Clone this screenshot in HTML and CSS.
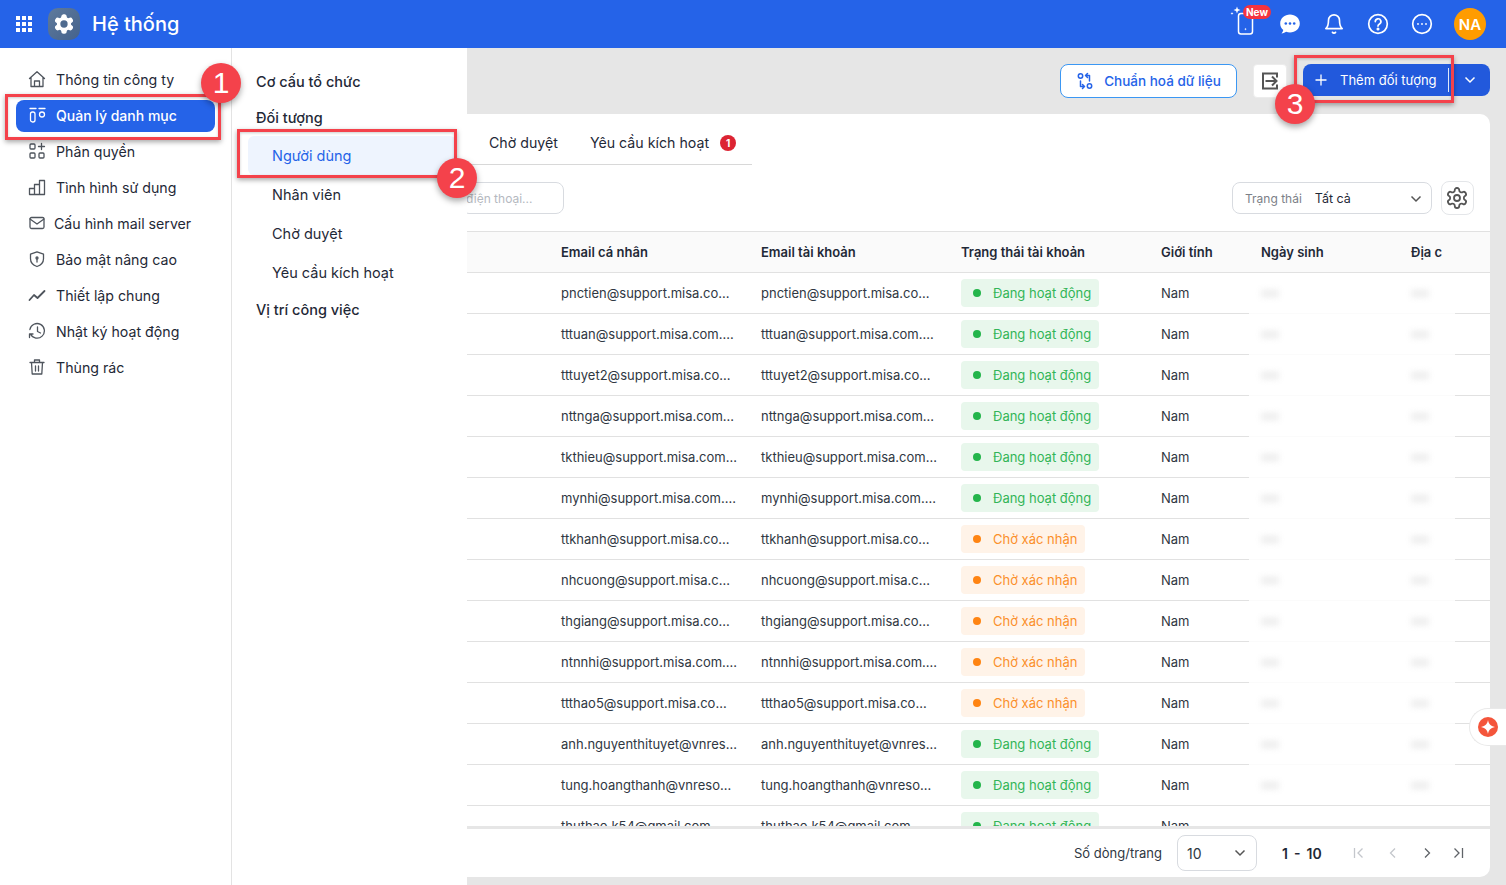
FILE: index.html
```html
<!DOCTYPE html>
<html lang="vi">
<head>
  <meta charset="UTF-8" />
  <meta name="viewport" content="width=device-width, initial-scale=1.0" />
  <title>Hệ thống</title>
  <link rel="stylesheet" href="styles.css">
</head>
<body>
  <header class="topbar">
    <div class="apps-grid"><i></i><i></i><i></i><i></i><i></i><i></i><i></i><i></i><i></i></div>
    <div class="app-logo">
      <svg width="22" height="22" viewBox="0 0 24 24"><path fill="#fff" stroke="#fff" stroke-width="1.5" d="M12.22 2h-.44a2 2 0 0 0-2 2v.18a2 2 0 0 1-1 1.73l-.43.25a2 2 0 0 1-2 0l-.15-.08a2 2 0 0 0-2.73.73l-.22.38a2 2 0 0 0 .73 2.73l.15.1a2 2 0 0 1 1 1.72v.51a2 2 0 0 1-1 1.74l-.15.09a2 2 0 0 0-.73 2.73l.22.38a2 2 0 0 0 2.73.73l.15-.08a2 2 0 0 1 2 0l.43.25a2 2 0 0 1 1 1.73V20a2 2 0 0 0 2 2h.44a2 2 0 0 0 2-2v-.18a2 2 0 0 1 1-1.73l.43-.25a2 2 0 0 1 2 0l.15.08a2 2 0 0 0 2.73-.73l.22-.39a2 2 0 0 0-.73-2.73l-.15-.08a2 2 0 0 1-1-1.74v-.5a2 2 0 0 1 1-1.74l.15-.09a2 2 0 0 0 .73-2.73l-.22-.38a2 2 0 0 0-2.73-.73l-.15.08a2 2 0 0 1-2 0l-.43-.25a2 2 0 0 1-1-1.73V4a2 2 0 0 0-2-2z"/><circle cx="12" cy="12" r="4" fill="#4f6b8f"/></svg>
    </div>
    <div class="app-title">Hệ thống</div>
    <div class="topbar-right">
      <div class="phone-new">
        <svg class="phone-icon" width="30" height="32" viewBox="0 0 30 32" fill="none" stroke="#fff" stroke-width="1.5"><rect x="7.5" y="5.5" width="14" height="20.5" rx="2.5"/><path fill="#fff" stroke="none" d="M6-1.500l.9 2.600 2.600.9-2.600.9L6 5.500l-.9-2.600-2.600-.9 2.600-.9zM1 4l.4 1.100L2.500 5.500l-1.100.4L1 7l-.4-1.100L-.5 5.500l1.100-.4zM14.500 19.800l.4.9.9.4-.9.4-.4.9-.4-.9-.9-.4.9-.4z"/></svg>
        <span class="new-tag">New</span>
      </div>
      <svg class="top-icon" width="22" height="22" viewBox="0 0 22 22"><path fill="#fff" d="M11 1.500c5.300 0 9.800 3.800 9.800 9s-4.500 9-9.800 9c-1.400 0-2.700-.3-3.900-.7-1.100.8-2.600 1.500-4.600 1.700 1-1 1.600-2.200 1.800-3.400C2.400 15.400 1.200 13.100 1.200 10.500c0-5.200 4.500-9 9.800-9z"/><circle cx="6.800" cy="10.500" r="1.300" fill="#2563e8"/><circle cx="11" cy="10.500" r="1.300" fill="#2563e8"/><circle cx="15.200" cy="10.500" r="1.300" fill="#2563e8"/></svg>
      <svg class="top-icon" width="22" height="22" viewBox="0 0 24 24" fill="none" stroke="#fff" stroke-width="1.800" stroke-linecap="round" stroke-linejoin="round"><path d="M6 8a6 6 0 0 1 12 0c0 7 3 9 3 9H3s3-2 3-9"/><path d="M10.300 21a1.940 1.940 0 0 0 3.400 0"/></svg>
      <svg class="top-icon" width="22" height="22" viewBox="0 0 22 22" fill="none" stroke="#fff" stroke-width="1.700" stroke-linecap="round"><circle cx="11" cy="11" r="9.300"/><path d="M8.300 8.600a2.800 2.800 0 1 1 4.200 2.400c-.9.500-1.500 1.100-1.500 2.100"/><circle cx="11" cy="16" r=".7" fill="#fff"/></svg>
      <svg class="top-icon" width="22" height="22" viewBox="0 0 22 22" fill="none" stroke="#fff" stroke-width="1.700"><circle cx="11" cy="11" r="9.300"/><circle cx="7" cy="11" r=".9" fill="#fff" stroke="none"/><circle cx="11" cy="11" r=".9" fill="#fff" stroke="none"/><circle cx="15" cy="11" r=".9" fill="#fff" stroke="none"/></svg>
      <div class="avatar">NA</div>
    </div>
  </header>

  <div class="layout">
    <nav class="sidebar">
      <a class="side-item">
        <svg width="18" height="18" viewBox="0 0 18 18"><path d="M1.500 8.500L9 1.800l7.500 6.700M3 7.500v9h12v-9M6.500 16.500v-5.500h5v5.500"/></svg>
        <span>Thông tin công ty</span>
      </a>
      <a class="side-item active">
        <svg width="18" height="18" viewBox="0 0 18 18"><path d="M2 2.500h6M11 2.500h6"/><rect x="2.500" y="6" width="4.500" height="10" rx="2"/><circle cx="14" cy="8.500" r="2.500"/></svg>
        <span>Quản lý danh mục</span>
      </a>
      <a class="side-item">
        <svg width="18" height="18" viewBox="0 0 18 18"><rect x="2" y="2" width="5" height="5" rx="1"/><rect x="2" y="11" width="5" height="5" rx="1"/><rect x="11" y="11" width="5" height="5" rx="1"/><path d="M13.500 1.500v6M10.500 4.500h6"/></svg>
        <span>Phân quyền</span>
      </a>
      <a class="side-item">
        <svg width="18" height="18" viewBox="0 0 18 18"><path d="M1.500 10.500h5v6h-5zM6.500 6.500h5v10h-5zM11.500 2.500h5v14h-5z"/></svg>
        <span>Tình hình sử dụng</span>
      </a>
      <a class="side-item mail">
        <svg width="18" height="18" viewBox="0 0 18 18"><rect x="2" y="3.500" width="14" height="11" rx="1.500"/><path d="M2 5l7 5 7-5"/></svg>
        <span>Cấu hình mail server</span>
      </a>
      <a class="side-item">
        <svg width="18" height="18" viewBox="0 0 18 18"><path d="M9 1.800l6.500 2.400v4.500c0 3.800-2.700 6.500-6.500 7.800-3.800-1.300-6.500-4-6.500-7.800V4.200z"/><circle cx="9" cy="8" r="1"/><path d="M9 9v3"/></svg>
        <span>Bảo mật nâng cao</span>
      </a>
      <a class="side-item">
        <svg width="18" height="18" viewBox="0 0 18 18"><path stroke-width="1.800" d="M1.500 14l4.500-5 3.500 3L16.500 5"/></svg>
        <span>Thiết lập chung</span>
      </a>
      <a class="side-item">
        <svg width="18" height="18" viewBox="0 0 18 18"><path d="M2.500 12a7.300 7.300 0 1 0-.6-4.500M1.500 15.500V12h3.500"/><path d="M9.500 5v4.500l3 1.500"/></svg>
        <span>Nhật ký hoạt động</span>
      </a>
      <a class="side-item">
        <svg width="18" height="18" viewBox="0 0 18 18"><path d="M2 4.500h14M6.500 4.500V2h5v2.500M3.500 4.500l.7 11.500h9.600l.7-11.500M7.500 8v5M10.500 8v5"/></svg>
        <span>Thùng rác</span>
      </a>
    </nav>

    <nav class="submenu">
      <div class="sub-head">Cơ cấu tổ chức</div>
      <div class="sub-head">Đối tượng</div>
      <a class="sub-item active">Người dùng</a>
      <a class="sub-item">Nhân viên</a>
      <a class="sub-item">Chờ duyệt</a>
      <a class="sub-item">Yêu cầu kích hoạt</a>
      <div class="sub-head">Vị trí công việc</div>
    </nav>

    <main class="main">
      <div class="toolbar">
        <button class="btn-outline">
          <svg width="18" height="18" viewBox="0 0 18 18" fill="none" stroke="#2563e8" stroke-width="1.500" stroke-linecap="round" stroke-linejoin="round"><circle cx="4.500" cy="4" r="2.200"/><circle cx="13.500" cy="14" r="2.200"/><path d="M4.500 9v5.500h4M6.500 12.500l2 2-2 2M13.500 9V3.500h-4M11.500 1.500l-2 2 2 2"/></svg>
          Chuẩn hoá dữ liệu
        </button>
        <button class="btn-square">
          <svg width="20" height="20" viewBox="0 0 20 20" fill="none" stroke="#555" stroke-width="2"><path d="M17 6.500V2.500H3v15h14v-4"/><path d="M5.500 10h11M12 5.500l4.500 4.500-4.500 4.500"/></svg>
        </button>
        <div class="btn-add">
          <div class="btn-add-main">
            <svg width="12" height="12" viewBox="0 0 12 12" stroke="#fff" stroke-width="1.300"><path d="M6 .5v11M.5 6h11"/></svg>
            <span>Thêm đối tượng</span>
          </div>
          <div class="btn-add-more">
            <svg width="12" height="8" viewBox="0 0 12 8" fill="none" stroke="#fff" stroke-width="1.500"><path d="M1.500 1.500L6 6l4.500-4.500"/></svg>
          </div>
        </div>
      </div>

      <section class="card">
        <div class="tabs">
          <a class="tab">Chờ duyệt</a>
          <a class="tab">Yêu cầu kích hoạt <b class="tab-badge">1</b></a>
        </div>

        <div class="filters">
          <div class="search-box">điện thoại...</div>
          <div class="status-select">
            <span class="status-label">Trạng thái</span>
            <span class="status-value">Tất cả</span>
            <svg width="12" height="8" viewBox="0 0 12 8" fill="none" stroke="#555" stroke-width="1.500"><path d="M1.500 1.500L6 6l4.500-4.500"/></svg>
          </div>
          <button class="gear-btn">
            <svg width="24" height="24" viewBox="0 0 24 24" fill="none" stroke="#555" stroke-width="1.800"><path d="M12.22 2h-.44a2 2 0 0 0-2 2v.18a2 2 0 0 1-1 1.73l-.43.25a2 2 0 0 1-2 0l-.15-.08a2 2 0 0 0-2.73.73l-.22.38a2 2 0 0 0 .73 2.73l.15.1a2 2 0 0 1 1 1.72v.51a2 2 0 0 1-1 1.74l-.15.09a2 2 0 0 0-.73 2.73l.22.38a2 2 0 0 0 2.73.73l.15-.08a2 2 0 0 1 2 0l.43.25a2 2 0 0 1 1 1.73V20a2 2 0 0 0 2 2h.44a2 2 0 0 0 2-2v-.18a2 2 0 0 1 1-1.73l.43-.25a2 2 0 0 1 2 0l.15.08a2 2 0 0 0 2.73-.73l.22-.39a2 2 0 0 0-.73-2.73l-.15-.08a2 2 0 0 1-1-1.74v-.5a2 2 0 0 1 1-1.74l.15-.09a2 2 0 0 0 .73-2.73l-.22-.38a2 2 0 0 0-2.73-.73l-.15.08a2 2 0 0 1-2 0l-.43-.25a2 2 0 0 1-1-1.73V4a2 2 0 0 0-2-2z"/><circle cx="12" cy="12" r="3"/></svg>
          </button>
        </div>

        <div class="table">
          <div class="row head">
            <div></div><div>Email cá nhân</div><div>Email tài khoản</div><div>Trạng thái tài khoản</div><div>Giới tính</div><div>Ngày sinh</div><div>Địa c</div><div></div>
          </div>
          <div class="row">
            <div></div><div>pnctien@support.misa.co...</div><div>pnctien@support.misa.co...</div><div><span class="chip ok">Đang hoạt động</span></div><div>Nam</div><div class="hidden-data"><i class="smudge"></i></div><div class="hidden-data"><i class="smudge"></i></div><div></div>
          </div>
          <div class="row">
            <div></div><div>tttuan@support.misa.com....</div><div>tttuan@support.misa.com....</div><div><span class="chip ok">Đang hoạt động</span></div><div>Nam</div><div class="hidden-data"><i class="smudge"></i></div><div class="hidden-data"><i class="smudge"></i></div><div></div>
          </div>
          <div class="row">
            <div></div><div>tttuyet2@support.misa.co...</div><div>tttuyet2@support.misa.co...</div><div><span class="chip ok">Đang hoạt động</span></div><div>Nam</div><div class="hidden-data"><i class="smudge"></i></div><div class="hidden-data"><i class="smudge"></i></div><div></div>
          </div>
          <div class="row">
            <div></div><div>nttnga@support.misa.com...</div><div>nttnga@support.misa.com...</div><div><span class="chip ok">Đang hoạt động</span></div><div>Nam</div><div class="hidden-data"><i class="smudge"></i></div><div class="hidden-data"><i class="smudge"></i></div><div></div>
          </div>
          <div class="row">
            <div></div><div>tkthieu@support.misa.com...</div><div>tkthieu@support.misa.com...</div><div><span class="chip ok">Đang hoạt động</span></div><div>Nam</div><div class="hidden-data"><i class="smudge"></i></div><div class="hidden-data"><i class="smudge"></i></div><div></div>
          </div>
          <div class="row">
            <div></div><div>mynhi@support.misa.com....</div><div>mynhi@support.misa.com....</div><div><span class="chip ok">Đang hoạt động</span></div><div>Nam</div><div class="hidden-data"><i class="smudge"></i></div><div class="hidden-data"><i class="smudge"></i></div><div></div>
          </div>
          <div class="row">
            <div></div><div>ttkhanh@support.misa.co...</div><div>ttkhanh@support.misa.co...</div><div><span class="chip wait">Chờ xác nhận</span></div><div>Nam</div><div class="hidden-data"><i class="smudge"></i></div><div class="hidden-data"><i class="smudge"></i></div><div></div>
          </div>
          <div class="row">
            <div></div><div>nhcuong@support.misa.c...</div><div>nhcuong@support.misa.c...</div><div><span class="chip wait">Chờ xác nhận</span></div><div>Nam</div><div class="hidden-data"><i class="smudge"></i></div><div class="hidden-data"><i class="smudge"></i></div><div></div>
          </div>
          <div class="row">
            <div></div><div>thgiang@support.misa.co...</div><div>thgiang@support.misa.co...</div><div><span class="chip wait">Chờ xác nhận</span></div><div>Nam</div><div class="hidden-data"><i class="smudge"></i></div><div class="hidden-data"><i class="smudge"></i></div><div></div>
          </div>
          <div class="row">
            <div></div><div>ntnnhi@support.misa.com....</div><div>ntnnhi@support.misa.com....</div><div><span class="chip wait">Chờ xác nhận</span></div><div>Nam</div><div class="hidden-data"><i class="smudge"></i></div><div class="hidden-data"><i class="smudge"></i></div><div></div>
          </div>
          <div class="row">
            <div></div><div>ttthao5@support.misa.co...</div><div>ttthao5@support.misa.co...</div><div><span class="chip wait">Chờ xác nhận</span></div><div>Nam</div><div class="hidden-data"><i class="smudge"></i></div><div class="hidden-data"><i class="smudge"></i></div><div></div>
          </div>
          <div class="row">
            <div></div><div>anh.nguyenthituyet@vnres...</div><div>anh.nguyenthituyet@vnres...</div><div><span class="chip ok">Đang hoạt động</span></div><div>Nam</div><div class="hidden-data"><i class="smudge"></i></div><div class="hidden-data"><i class="smudge"></i></div><div></div>
          </div>
          <div class="row plain">
            <div></div><div>tung.hoangthanh@vnreso...</div><div>tung.hoangthanh@vnreso...</div><div><span class="chip ok">Đang hoạt động</span></div><div>Nam</div><div><i class="smudge"></i></div><div><i class="smudge"></i></div><div></div>
          </div>
          <div class="row plain">
            <div></div><div>thuthao.k54@gmail.com</div><div>thuthao.k54@gmail.com</div><div><span class="chip ok">Đang hoạt động</span></div><div>Nam</div><div></div><div></div><div></div>
          </div>
        </div>

        <div class="pager">
          <span class="pager-label">Số dòng/trang</span>
          <div class="page-size">
            <span>10</span>
            <svg width="12" height="8" viewBox="0 0 12 8" fill="none" stroke="#555" stroke-width="1.500"><path d="M1.500 1.500L6 6l4.500-4.500"/></svg>
          </div>
          <b class="page-range">1 - 10</b>
          <div class="page-arrows">
            <svg width="12" height="12" viewBox="0 0 12 12" fill="none" stroke="#c4c7cc" stroke-width="1.300"><path d="M1.500 1v10M9.500 1.500L5 6l4.500 4.500"/></svg>
            <svg width="12" height="12" viewBox="0 0 12 12" fill="none" stroke="#c4c7cc" stroke-width="1.300"><path d="M8 1.500L3.500 6 8 10.500"/></svg>
            <svg width="12" height="12" viewBox="0 0 12 12" fill="none" stroke="#5f6368" stroke-width="1.300"><path d="M4 1.500L8.500 6 4 10.500"/></svg>
            <svg class="last-arrow" width="12" height="12" viewBox="0 0 12 12" fill="none" stroke="#5f6368" stroke-width="1.300"><path d="M10.500 1v10M2.500 1.500L7 6l-4.500 4.500"/></svg>
          </div>
        </div>
      </section>
    </main>
  </div>

  <div class="ai-tab">
    <span class="ai-dot">
      <svg width="14" height="14" viewBox="0 0 14 14"><path fill="#fff" d="M7 0c.6 3.700 2.300 5.800 7 7-4.700 1.200-6.400 3.300-7 7-.6-3.700-2.300-5.800-7-7 4.700-1.200 6.400-3.300 7-7z"/></svg>
    </span>
  </div>

  <!-- red callouts painted over the screen -->
  <div class="mark mark-one"></div>
  <div class="mark mark-two"></div>
  <div class="mark mark-three"></div>
  <div class="step step-one">1</div>
  <div class="step step-two">2</div>
  <div class="step step-three">3</div>
</body>
</html>
```

FILE: styles.css
```css
* {
  box-sizing: border-box;
}
html, body {
  margin: 0;
  padding: 0;
  height: 100%;
  overflow: hidden;
}
body {
  font-family: 'Inter', 'Noto Sans', sans-serif;
  font-size: 13px;
  color: #1f2937;
  position: relative;
}
button {
  font-family: inherit;
  cursor: pointer;
}

/* top bar */
.topbar {
  height: 48px;
  background: #2563e8;
  display: flex;
  align-items: center;
  padding: 0 20px 0 16px;
  color: #fff;
}
.apps-grid {
  display: grid;
  grid-template-columns: repeat(3, 4px);
  gap: 2px;
  margin-right: 16px;
}
.apps-grid i {
  width: 4px;
  height: 4px;
  background: #fff;
}
.app-logo {
  width: 32px;
  height: 32px;
  border-radius: 10px;
  background: linear-gradient(135deg, #5f7a9c, #44628c);
  display: flex;
  align-items: center;
  justify-content: center;
}
.app-title {
  font-size: 20px;
  font-weight: 500;
  margin-left: 12px;
}
.topbar-right {
  margin-left: auto;
  display: flex;
  align-items: center;
}
.phone-new {
  position: relative;
  width: 30px;
  height: 32px;
  margin-right: 18px;
}
.phone-icon {
  overflow: visible;
}
.new-tag {
  position: absolute;
  left: 12px;
  top: -3px;
  background: #f5333f;
  color: #fff;
  font-size: 10px;
  font-weight: 700;
  line-height: 14px;
  padding: 0 3px;
  border-radius: 7px;
}
.top-icon {
  margin-right: 22px;
}
.avatar {
  width: 32px;
  height: 32px;
  border-radius: 50%;
  background: #ff9c00;
  color: #fff;
  font-size: 15px;
  font-weight: 600;
  display: flex;
  align-items: center;
  justify-content: center;
  margin-left: -1px;
}

/* page frame */
.layout {
  display: flex;
  height: 837px;
}
.sidebar {
  width: 232px;
  flex: none;
  background: #fff;
  border-right: 1px solid #e3e3e3;
  padding: 16px 16px 0;
}
.side-item {
  display: flex;
  align-items: center;
  gap: 10px;
  height: 32px;
  margin-bottom: 4px;
  padding: 0 0 2px 12px;
  border-radius: 8px;
  font-size: 14.2px;
  color: #1f2937;
}
.side-item svg {
  flex: none;
  fill: none;
  stroke: #4f555d;
  stroke-width: 1.3;
  stroke-linecap: round;
  stroke-linejoin: round;
}
.side-item.mail {
  gap: 8px;
}
.side-item.active {
  background: #2563e8;
  color: #fff;
  font-size: 14px;
  font-weight: 500;
}
.side-item.active svg {
  stroke: #fff;
}

.submenu {
  width: 235px;
  flex: none;
  background: #fff;
  padding: 16px 11px 0 16px;
}
.sub-head {
  height: 36px;
  line-height: 36px;
  padding-left: 8px;
  font-size: 14.5px;
  font-weight: 500;
  color: #1f2937;
}
.sub-item {
  display: block;
  height: 39px;
  line-height: 39px;
  padding-left: 24px;
  font-size: 14.5px;
  color: #1f2937;
}
.sub-item.active {
  background: #eef4fe;
  color: #2563e8;
  border-radius: 6px;
}

.main {
  flex: 1;
  min-width: 0;
  background: #e6e6e6;
  padding: 0 16px 8px 0;
  display: flex;
  flex-direction: column;
}
.toolbar {
  height: 66px;
  flex: none;
  display: flex;
  align-items: flex-start;
  justify-content: flex-end;
  padding-top: 16px;
}
.btn-outline {
  height: 34px;
  width: 177px;
  display: flex;
  align-items: center;
  justify-content: center;
  gap: 10px;
  background: #fff;
  border: 1px solid #3b97f3;
  border-radius: 8px;
  color: #2563e8;
  font-size: 13.5px;
  font-weight: 500;
  padding: 0 0 1px;
}
.btn-square {
  width: 34px;
  height: 34px;
  margin-left: 16px;
  background: #fff;
  border: 1px solid #ececec;
  border-radius: 4px;
  display: flex;
  align-items: center;
  justify-content: center;
  padding: 0;
}
.btn-add {
  height: 32px;
  width: 187px;
  margin-left: 16px;
  background: #2259dc;
  border-radius: 8px;
  display: flex;
  align-items: center;
  color: #fff;
  font-size: 13px;
}
.btn-add-main {
  width: 146px;
  height: 24px;
  border-right: 1px solid #dfe8fb;
  display: flex;
  align-items: center;
  padding-left: 12px;
  gap: 13px;
  white-space: nowrap;
}
.btn-add-more {
  flex: 1;
  display: flex;
  justify-content: center;
}

.card {
  flex: 1;
  min-height: 0;
  background: #fff;
  border-radius: 0 10px 10px 0;
  display: flex;
  flex-direction: column;
  overflow: hidden;
}
.tabs {
  width: 285px;
  height: 51px;
  flex: none;
  display: flex;
  align-items: center;
  gap: 32px;
  padding: 6px 0 0 22px;
  border-bottom: 1px solid #d8d8d8;
  font-size: 14.2px;
  color: #1f2937;
}
.tab-badge {
  display: inline-block;
  width: 16px;
  height: 16px;
  margin-left: 7px;
  border-radius: 50%;
  background: #dc2433;
  color: #fff;
  font-size: 10px;
  line-height: 16px;
  text-align: center;
  vertical-align: 1px;
}
.filters {
  height: 66px;
  flex: none;
  display: flex;
  align-items: center;
  padding: 0 16px 0 0;
}
.search-box {
  width: 103px;
  height: 32px;
  margin-left: -6px;
  text-indent: 4px;
  border: 1px solid #d8dbe0;
  border-radius: 8px;
  color: #b5b9bf;
  font-size: 12px;
  line-height: 31px;
}
.status-select {
  width: 200px;
  height: 32px;
  margin-left: auto;
  border: 1px solid #d8dbe0;
  border-radius: 8px;
  display: flex;
  align-items: center;
  padding: 1px 9px 0 12px;
  font-size: 12px;
}
.status-label {
  color: #7c8087;
}
.status-value {
  margin-left: 13px;
  color: #1f2937;
  font-size: 12.5px;
}
.status-select svg {
  margin-left: auto;
}
.gear-btn {
  width: 33px;
  height: 34px;
  margin-left: 9px;
  background: #fff;
  border: 1px solid #e4e6e9;
  border-radius: 8px;
  display: flex;
  align-items: center;
  justify-content: center;
  padding: 0 1px 0 0;
}

/* table */
.table {
  flex: 1;
  min-height: 0;
  overflow: hidden;
}
.row {
  display: grid;
  grid-template-columns: 82px 200px 200px 200px 100px 150px 56px 35px;
  height: 41px;
}
.row > div {
  padding-left: 12px;
  border-bottom: 1px solid #e1e1e1;
  display: flex;
  align-items: center;
  white-space: nowrap;
  overflow: hidden;
  font-size: 13px;
  color: #2f3742;
}
.row.head {
  height: 42px;
  background: #fafafa;
  border-top: 1px solid #e1e1e1;
}
.row.head > div {
  font-weight: 600;
  color: #1f2937;
}
.row > .hidden-data {
  border-bottom-color: #fbfbfb;
}
.smudge {
  display: block;
  width: 18px;
  height: 7px;
  background: #ececec;
  filter: blur(3px);
}
.chip {
  height: 28px;
  display: inline-flex;
  align-items: center;
  padding: 0 8px 0 32px;
  border-radius: 4px;
  position: relative;
  font-size: 13px;
}
.chip::before {
  content: '';
  position: absolute;
  left: 12px;
  top: 10px;
  width: 8px;
  height: 8px;
  border-radius: 50%;
}
.chip.ok {
  background: #e8f7ec;
  color: #32b557;
}
.chip.wait {
  background: #fff3e8;
  color: #fb8f2a;
}
.chip.ok::before {
  background: #24b54b;
}
.chip.wait::before {
  background: #ff8412;
}

/* footer */
.pager {
  height: 51px;
  flex: none;
  border-top: 3px solid #e6e6e6;
  display: flex;
  align-items: center;
  padding-left: 607px;
  font-size: 13px;
  color: #2f3742;
}
.page-size {
  width: 80px;
  height: 36px;
  margin-left: 15px;
  border: 1px solid #d8dbe0;
  border-radius: 8px;
  display: flex;
  align-items: center;
  justify-content: space-between;
  padding: 0 10px 0 9px;
  font-size: 14px;
}
.page-range {
  margin-left: 25px;
  font-weight: 600;
  font-size: 14px;
  word-spacing: 2.5px;
  color: #1f2937;
}
.page-arrows {
  margin-left: 31px;
  display: flex;
  align-items: center;
  gap: 22px;
}
.last-arrow {
  margin-left: -3px;
}

/* floating tab at right edge */
.ai-tab {
  position: absolute;
  right: 0;
  top: 708px;
  width: 37px;
  height: 38px;
  background: #fff;
  border: 1px solid #e9e9e9;
  border-right: none;
  border-radius: 19px 0 0 19px;
  display: flex;
  align-items: center;
  padding-left: 8px;
}
.ai-dot {
  width: 20px;
  height: 20px;
  border-radius: 50%;
  background: #f4553b;
  display: flex;
  align-items: center;
  justify-content: center;
}

/* callouts */
.mark {
  position: absolute;
  border: 3px solid #f4424b;
  box-shadow: 0 2px 5px rgba(0,0,0,0.35), inset 0 1px 3px rgba(0,0,0,0.2);
}
.mark-one {
  left: 5px;
  top: 94px;
  width: 216px;
  height: 46px;
}
.mark-two {
  left: 237px;
  top: 129px;
  width: 220px;
  height: 49px;
}
.mark-three {
  left: 1294px;
  top: 55px;
  width: 160px;
  height: 48px;
}
.step {
  position: absolute;
  width: 40px;
  height: 40px;
  border-radius: 50%;
  background: #f4424b;
  box-shadow: 0 3px 6px rgba(0,0,0,0.35);
  color: #fff;
  font-family: 'Liberation Sans', sans-serif;
  font-size: 30px;
  line-height: 40px;
  text-align: center;
}
.step-one {
  left: 201px;
  top: 63px;
}
.step-two {
  left: 437px;
  top: 158px;
}
.step-three {
  left: 1275px;
  top: 84px;
}
```
